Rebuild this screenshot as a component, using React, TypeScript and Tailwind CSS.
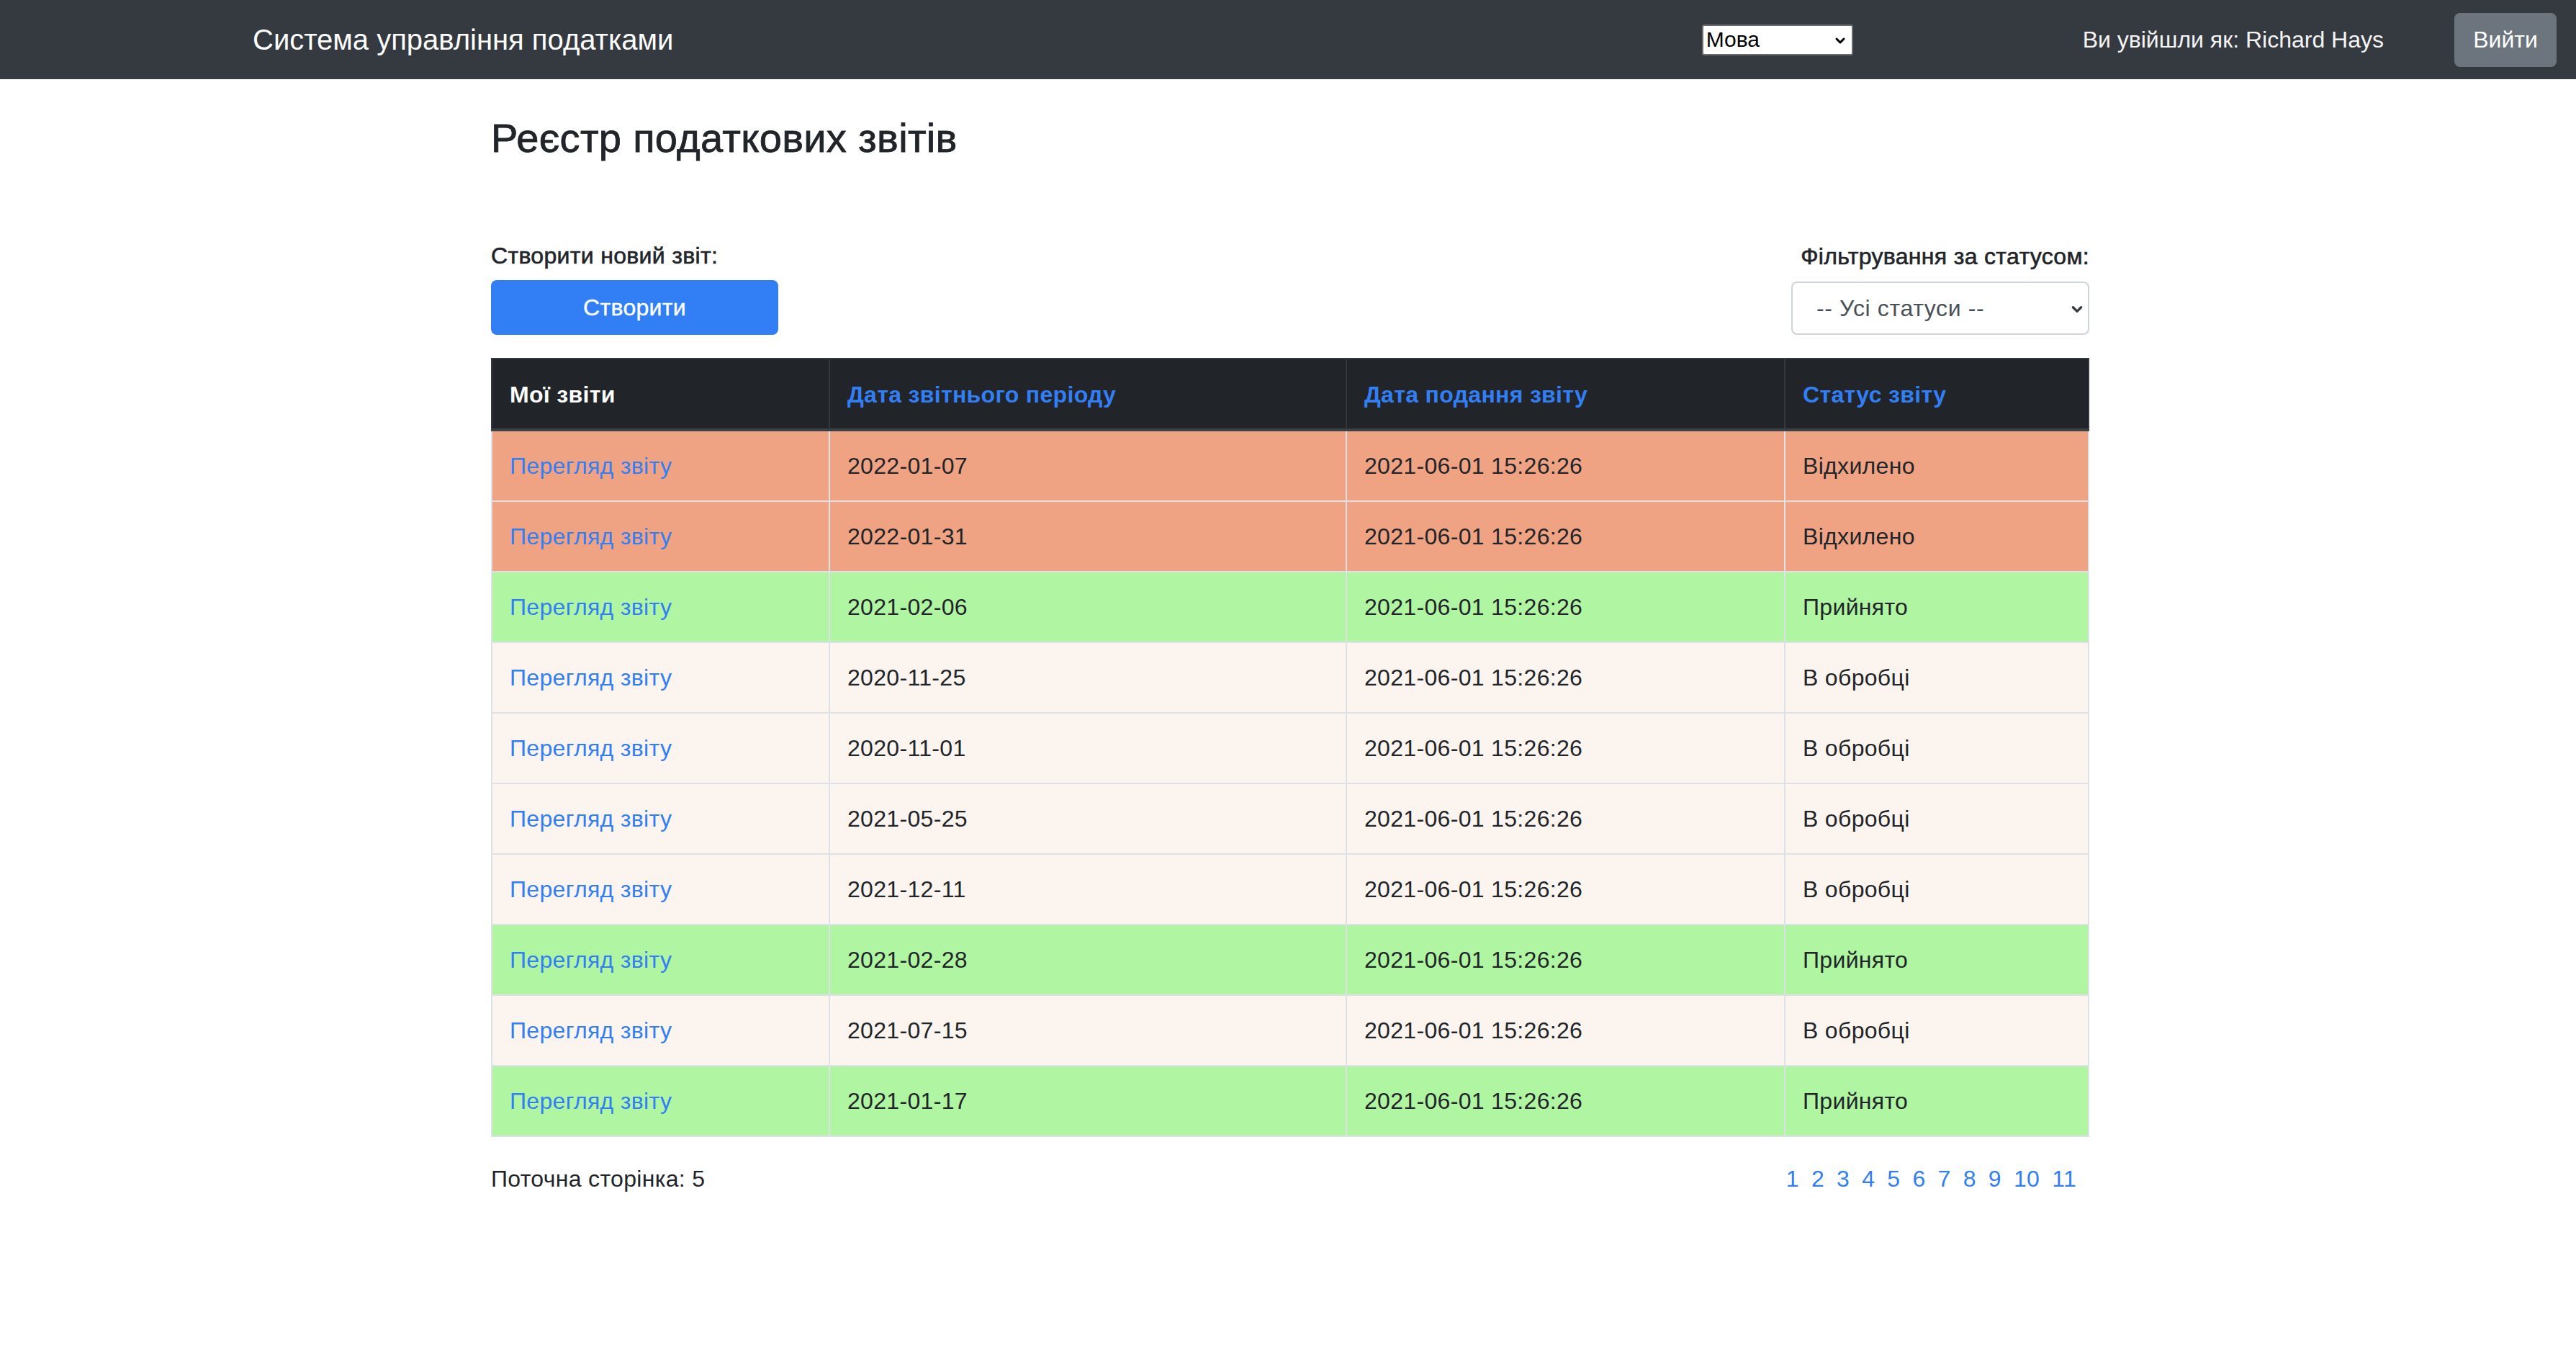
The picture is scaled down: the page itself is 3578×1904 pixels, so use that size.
import React from 'react'

type Report = {
  period: string
  submitted: string
  status: 'rejected' | 'accepted' | 'pending'
}

const reports: Report[] = [
  { period: '2022-01-07', submitted: '2021-06-01 15:26:26', status: 'rejected' },
  { period: '2022-01-31', submitted: '2021-06-01 15:26:26', status: 'rejected' },
  { period: '2021-02-06', submitted: '2021-06-01 15:26:26', status: 'accepted' },
  { period: '2020-11-25', submitted: '2021-06-01 15:26:26', status: 'pending' },
  { period: '2020-11-01', submitted: '2021-06-01 15:26:26', status: 'pending' },
  { period: '2021-05-25', submitted: '2021-06-01 15:26:26', status: 'pending' },
  { period: '2021-12-11', submitted: '2021-06-01 15:26:26', status: 'pending' },
  { period: '2021-02-28', submitted: '2021-06-01 15:26:26', status: 'accepted' },
  { period: '2021-07-15', submitted: '2021-06-01 15:26:26', status: 'pending' },
  { period: '2021-01-17', submitted: '2021-06-01 15:26:26', status: 'accepted' },
]

const statusLabel = {
  rejected: 'Відхилено',
  accepted: 'Прийнято',
  pending: 'В обробці',
}

const rowBg = {
  rejected: 'bg-[#f0a383]',
  accepted: 'bg-[#b0f6a2]',
  pending: 'bg-[#fcf4ee]',
}

const Chevron = ({ className }: { className?: string }) => (
  <svg className={className} viewBox="0 0 16 16" fill="none" stroke="currentColor" strokeWidth={3} strokeLinecap="round" strokeLinejoin="round">
    <path d="M3 6l5 5 5-5" />
  </svg>
)

const Navbar = () => (
  <nav className="h-[110px] bg-[#343a40] flex items-center pl-[351px] pr-[27px]">
    <span className="text-[40px] text-white leading-none">Система управління податками</span>
    <div className="flex-1" />
    {/* language picker */}
    <div className="relative w-[210px] h-[43px]">
      <select className="appearance-none w-full h-full bg-white text-black text-[30px] leading-none pl-[4px] rounded-[3px] border-2 border-[#6b6b6b] outline-none">
        <option>Мова</option>
        <option>English</option>
      </select>
      <Chevron className="absolute right-[10px] top-[14px] w-[16px] h-[16px] text-black pointer-events-none" />
    </div>
    <span className="ml-[319px] text-[32px] text-[#f4f4f4]">Ви увійшли як: Richard Hays</span>
    <button className="ml-[98px] w-[142px] h-[75px] rounded-[8px] bg-[#6c757d] text-white text-[32px]">Вийти</button>
  </nav>
)

const App = () => {
  return (
    <div className="min-h-screen bg-white text-[#212529] font-['Liberation_Sans',Arial,sans-serif]">
      <Navbar />

      <main className="w-[2226px] mx-auto pl-[6px] pt-[48px] tracking-[0.02em]">
        <h3 className="text-[56px] font-medium leading-[1.2] text-[#212529] [-webkit-text-stroke:0.8px_#212529]">Реєстр податкових звітів</h3>

        {/* actions row */}
        <div className="flex justify-between items-end mt-[106px]">
          <div>
            <div className="text-[32px] leading-[48px] mb-[10px] [-webkit-text-stroke:0.6px_#212529]">Створити новий звіт:</div>
            <button className="w-[399px] h-[76px] rounded-[8px] bg-[#327ff5] text-white text-[32px] [-webkit-text-stroke:0.4px_#ffffff]">Створити</button>
          </div>
          <div className="flex flex-col items-end">
            <div className="text-[32px] leading-[48px] mb-[11px] [-webkit-text-stroke:0.6px_#212529]">Фільтрування за статусом:</div>
            <div className="relative w-[414px] h-[74px]">
              <select className="appearance-none w-full h-full bg-white border-2 border-[#ced4da] rounded-[8px] pl-[33px] text-[32px] tracking-[0.02em] text-[#495057] outline-none">
                <option>-- Усі статуси --</option>
                <option>Прийнято</option>
                <option>Відхилено</option>
                <option>В обробці</option>
              </select>
              <Chevron className="absolute right-[8px] top-[29px] w-[18px] h-[18px] text-[#343a40] pointer-events-none" />
            </div>
          </div>
        </div>

        {/* reports table */}
        <table className="w-full mt-[32px] border-collapse text-[32px] leading-[48px]">
          <thead>
            <tr className="bg-[#212529] text-left">
              <th className="w-[469px] px-[24px] pt-[25px] pb-[23px] font-bold text-white border-2 border-[#32383e] border-b-4 border-b-[#3b4045]">Мої звіти</th>
              <th className="w-[718px] px-[24px] pt-[25px] pb-[23px] font-bold text-[#327ff5] border-2 border-[#32383e] border-b-4 border-b-[#3b4045]">Дата звітнього періоду</th>
              <th className="w-[609px] px-[24px] pt-[25px] pb-[23px] font-bold text-[#327ff5] border-2 border-[#32383e] border-b-4 border-b-[#3b4045]">Дата подання звіту</th>
              <th className="px-[24px] pt-[25px] pb-[23px] font-bold text-[#327ff5] border-2 border-[#32383e] border-b-4 border-b-[#3b4045]">Статус звіту</th>
            </tr>
          </thead>
          <tbody>
            {reports.map((r, i) => (
              <tr key={i} className={rowBg[r.status]}>
                <td className="px-[24px] py-[24px] border-2 border-[#dee2e6]">
                  <a href="#" className="text-[#327ff5]">Перегляд звіту</a>
                </td>
                <td className="px-[24px] py-[24px] border-2 border-[#dee2e6]">{r.period}</td>
                <td className="px-[24px] py-[24px] border-2 border-[#dee2e6]">{r.submitted}</td>
                <td className="px-[24px] py-[24px] border-2 border-[#dee2e6]">{statusLabel[r.status]}</td>
              </tr>
            ))}
          </tbody>
        </table>

        {/* pagination */}
        <div className="flex justify-between items-center mt-[34px] text-[32px] leading-[48px]">
          <span>Поточна сторінка: 5</span>
          <div className="flex gap-[17px] pr-[18px]">
            {[1, 2, 3, 4, 5, 6, 7, 8, 9, 10, 11].map((n) => (
              <a key={n} href="#" className="text-[#327ff5]">{n}</a>
            ))}
          </div>
        </div>
      </main>
    </div>
  )
}

export default App
